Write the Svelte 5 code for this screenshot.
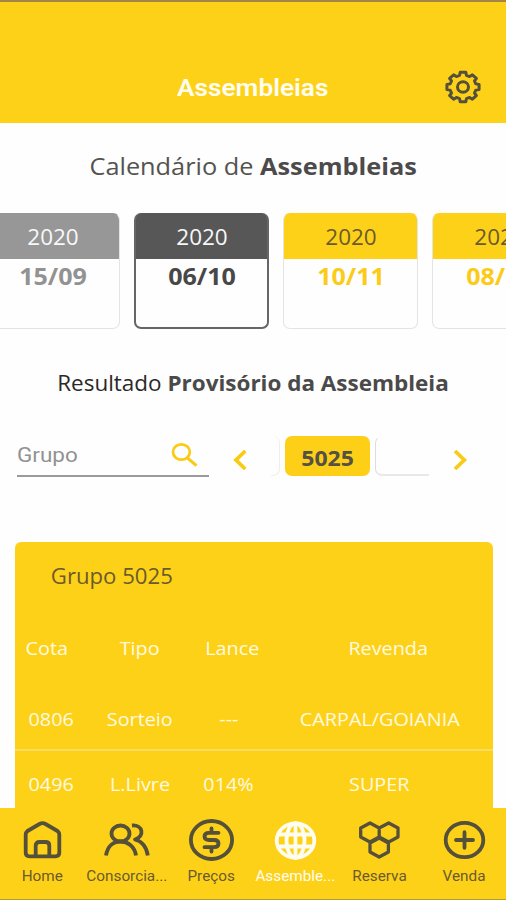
<script>
  const dates = [
    { year: '2020', day: '15/09', kind: 'past' },
    { year: '2020', day: '06/10', kind: 'current' },
    { year: '2020', day: '10/11', kind: 'next' },
    { year: '2020', day: '08/12', kind: 'next' }
  ];
  const rows = [
    ['0806', 'Sorteio', '---', 'CARPAL/GOIANIA'],
    ['0496', 'L.Livre', '014%', 'SUPER']
  ];
  const tabs = [
    { id: 'home', label: 'Home' },
    { id: 'people', label: 'Consorcia...' },
    { id: 'price', label: 'Preços' },
    { id: 'globe', label: 'Assemble...' },
    { id: 'hex', label: 'Reserva' },
    { id: 'plus', label: 'Venda' }
  ];
  // Eight-toothed gear outline centred on the origin
  const gear = (() => {
    const pts = [];
    for (let i = 0; i < 8; i++) {
      const a = i * 45 - 90;
      for (const [off, r] of [[-15, 13], [-10, 16], [10, 16], [15, 13]]) {
        const t = ((a + off) * Math.PI) / 180;
        pts.push(`${(r * Math.cos(t) * 1.02).toFixed(2)} ${(r * Math.sin(t) * 0.93).toFixed(2)}`);
      }
    }
    return 'M' + pts.join('L') + 'Z';
  })();
</script>

<div class="screen">
  <header>
    <div class="side"></div>
    <h1><span class="w">Assembleias</span></h1>
    <div class="side">
      <svg width="38" height="38" viewBox="-19 -18 38 38" fill="none" stroke="#55503a" stroke-width="3" stroke-linejoin="round">
        <path d={gear} />
        <ellipse rx="5.5" ry="5.2" />
      </svg>
    </div>
  </header>

  <main>
    <h2><span class="w">Calendário de <b>Assembleias</b></span></h2>
    <div class="dates">
      {#each dates as d}
        <div class="date {d.kind}">
          <div class="year"><span class="w">{d.year}</span></div>
          <div class="day"><span class="w">{d.day}</span></div>
        </div>
      {/each}
    </div>

    <h3><span class="w">Resultado <b>Provisório da Assembleia</b></span></h3>

    <div class="filter">
      <div class="field">
        <span class="w">Grupo</span>
        <svg width="28" height="28" viewBox="0 0 28 28" fill="none" stroke="#f9cb14" stroke-width="2.7">
          <ellipse cx="10.4" cy="11" rx="8.4" ry="7.7" />
          <path d="M16 16.600l9.500 8" stroke-width="3.2" />
        </svg>
      </div>
      <svg class="chev left" width="16" height="22" viewBox="0 0 16 22" fill="none" stroke="#f9cb14" stroke-width="3.8"><path d="M13.300 2L4 11L13.300 20" /></svg>
      <div class="chips">
        <div class="chip before"></div>
        <div class="chip on"><span class="w">5025</span></div>
        <div class="chip after"></div>
      </div>
      <svg class="chev" width="16" height="22" viewBox="0 0 16 22" fill="none" stroke="#f9cb14" stroke-width="3.8"><path d="M3 2L12.300 11L3 20" /></svg>
    </div>

    <section>
      <div class="group"><span class="w">Grupo 5025</span></div>
      <div class="row head">
        {#each ['Cota', 'Tipo', 'Lance', 'Revenda'] as c}<div><span class="w">{c}</span></div>{/each}
      </div>
      {#each rows as r}
        <div class="row">
          {#each r as c}<div><span class="w">{c}</span></div>{/each}
        </div>
      {/each}
    </section>
  </main>

  <nav>
    {#each tabs as t}
      <div class="tab" class:active={t.id === 'globe'}>
        <svg width="50" height="46" viewBox="-25.5 -23 50 46" fill="none" stroke="currentColor" stroke-width="3.8" stroke-linejoin="round" stroke-linecap="round">
          {#if t.id === 'home'}
            <path d="M-16.800 -5.500Q-16.800 -7.500 -15 -9L-3 -16Q0 -17.800 3 -16L15 -9Q16.800 -7.500 16.800 -5.500V12.500Q16.800 16.300 13 16.300H-13Q-16.800 16.300 -16.800 12.500Z" />
            <path d="M-6.800 16V5.500Q-6.800 2 -3 2H3Q6.800 2 6.800 5.500V16" />
          {:else if t.id === 'people'}
            <ellipse cx="-6" cy="-6.500" rx="9" ry="8" />
            <path stroke-linecap="butt" d="M-20.500 15.500C-19 6 -13 1.500 -6 1.500S8 6 9.500 15.500" />
            <path stroke-linecap="butt" d="M5.500 -14.500C16.500 -15.500 18.500 -3.500 8.500 -.5C16 1.500 20 7 21.300 15.500" />
          {:else if t.id === 'price'}
            <ellipse rx="20.600" ry="19" />
            <path d="M7 -7.200H-2.500Q-7 -7.200 -7 -3.600T-2.500 0H2.500Q7 0 7 3.600T2.500 7.200H-7M0 -11.500V-7.500M0 7.500V11.500" />
          {:else if t.id === 'globe'}
            <ellipse cy=".5" rx="18.800" ry="17.200" />
            <ellipse cy=".5" rx="9" ry="17.200" />
            <path d="M0 -17V18M-17 -5.500H17M-17 6.500H17" />
          {:else if t.id === 'hex'}
            <path stroke-width="3.300" d="M-9.500 -17L-.3 -12V-3L-9.500 2L-18.800 -3V-12ZM9.200 -17L18.500 -12V-3L9.200 2L-.3 -3V-12ZM-.3 -2L8.900 3V12L-.3 17L-9.500 12V3Z" />
          {:else}
            <ellipse cy="0" rx="18.800" ry="17.200" />
            <path d="M-8.500 0H8.500M0 -7.800V7.800" />
          {/if}
        </svg>
        <span class="w">{t.label}</span>
      </div>
    {/each}
  </nav>
</div>

<style>
  .screen {
    width: 506px;
    height: 900px;
    display: flex;
    flex-direction: column;
    overflow: hidden;
    background: #fefefe;
    font-family: 'Open Sans', 'Noto Sans', sans-serif;
    color: #55534f;
  }
  h1, h2, h3 { margin: 0; font-weight: 400; }
  .w { display: inline-block; white-space: pre; transform: scaleX(1.07); }
  header {
    box-sizing: border-box;
    height: 123px;
    flex: none;
    border-top: 2px solid #a3854a;
    padding-top: 50px;
    display: flex;
    align-items: center;
    background: #fed119;
  }
  .side { width: 86px; display: flex; justify-content: center; }
  h1 { flex: 1; text-align: center; font: 600 24.5px/36px Roboto, sans-serif; color: #fffdf0; }
  main { flex: 1; min-height: 0; overflow: hidden; }
  h2 { margin-top: 25px; text-align: center; font-size: 24px; line-height: 36px; }
  h2 .w { transform: scaleX(1.055); }
  b { font-weight: 700; color: #4c4a4a; }
  .dates { display: flex; gap: 13.5px; margin: 29px 0 0 -15.5px; width: 583px; }
  .date {
    box-sizing: border-box;
    width: 135.5px;
    height: 116px;
    flex: none;
    border: 1px solid #e4e4e4;
    border-radius: 7px;
    overflow: hidden;
    text-align: center;
    background: linear-gradient(var(--c) 46px, #fefefe 46px);
    background-origin: border-box;
    border-top-color: var(--c);
  }
  .past { --c: #979797; color: #929292; }
  .current { --c: #575757; color: #484848; border: 2px solid #666; border-top: 1px solid #575757; }
  .next { --c: #fed119; color: #fccb18; }
  .year { height: 46px; padding-left: 1px; font-size: 21px; line-height: 47px; color: #f8f8f8; }
  .next .year { color: #6b5a2d; }
  .day { padding-left: 1px; font-size: 23px; font-weight: 700; line-height: 32px; }
  .day .w { transform: scaleX(1.09); }
  h3 { margin-top: 36px; text-align: center; font-size: 21px; line-height: 36px; color: #292929; }
  h3 b { color: #4a4a4a; }
  .filter { display: flex; align-items: center; height: 44px; margin: 32px 0 0 17px; }
  .field {
    box-sizing: border-box;
    width: 192px;
    height: 44px;
    border-bottom: 2px solid #9a9a9a;
    display: flex;
    justify-content: space-between;
    align-items: center;
    padding: 2px 10px 0 2px;
    font: 21px/42px Roboto, sans-serif;
    color: #929292;
  }
  .chev { flex: none; margin-top: 9px; }
  .left { margin: 9px 31px 0 23px; }
  .chips { display: flex; gap: 5.5px; width: 158px; height: 40px; margin: 2px 23px 0 -8px; overflow: hidden; flex: none; }
  .chip { box-sizing: border-box; width: 84.5px; height: 40px; flex: none; border: 1px solid #ddd; border-radius: 7px; }
  .before { width: 8.5px; border-width: 0 1px 1px 0; border-color: #eee; border-radius: 0 7px 7px 0; }
  .on { border: 0; background: #fdcf17; text-align: center; font-size: 21.5px; line-height: 43px; font-weight: 700; color: #575044; }
  .after { border-top-color: transparent; border-bottom-width: 2px; border-bottom-color: #e8e8e8; }
  section { margin: 65px 13.5px 0 14.5px; height: 300px; border-radius: 6px 6px 0 0; background: #fed119; }
  .group { padding-left: 39px; font-size: 21px; line-height: 68px; color: #6b5a2d; }
  .group .w { transform: scaleX(1.055); }
  .row {
    display: grid;
    grid-template-columns: 73px 105px 73px 228px;
    height: 65px;
    line-height: 66px;
    box-sizing: border-box;
    font-size: 18.5px;
    color: #fffae0;
    text-align: center;
    border-bottom: 2px solid #f9dc60;
  }
  .head { grid-template-columns: 65px 121px 64px 228px; height: 76px; line-height: 76px; border: 0; }
  .head div:last-child { padding-left: 20px; }
  nav {
    box-sizing: border-box;
    height: 92px;
    flex: none;
    display: flex;
    background: #fed119;
    border-bottom: 1.5px solid #b59a2e;
    padding-top: 9px;
  }
  .tab {
    width: 84.33px;
    display: flex;
    flex-direction: column;
    align-items: center;
    font: 14.3px/24px Roboto, sans-serif;
    color: #55503a;
  }
  .tab span { margin-top: 1px; color: #6b5a2d; }
  .active, .active span { color: #fffdf0; }
</style>
